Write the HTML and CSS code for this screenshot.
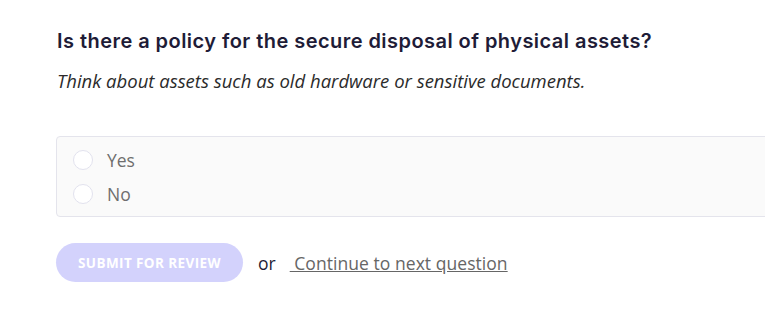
FILE: index.html
```html
<!DOCTYPE html>
<html lang="en">
<head>
  <meta charset="UTF-8">
  <title>Question</title>
  <meta name="viewport" content="width=device-width, initial-scale=1.0">
  <link rel="stylesheet" href="styles.css">
</head>
<body>
  <div class="question">
    <h2 class="question-title">Is there a policy for the secure disposal of physical assets?</h2>
    <p class="question-hint">Think about assets such as old hardware or sensitive documents.</p>

    <div class="options">
      <label class="option">
        <input type="radio" name="answer" value="yes">
        <span class="radio"></span>
        <span class="option-label">Yes</span>
      </label>
      <label class="option">
        <input type="radio" name="answer" value="no">
        <span class="radio"></span>
        <span class="option-label">No</span>
      </label>
    </div>

    <div class="actions">
      <button class="submit-btn" disabled>Submit for review</button>
      <span class="or">or</span>
      <a class="next-link" href="#"> Continue to next question</a>
    </div>
  </div>
</body>
</html>
```

FILE: styles.css
```css
html, body {
  margin: 0;
  overflow: hidden;
}

body {
  font-family: 'Open Sans', sans-serif;
  background: #fff;
}

.question {
  padding: 28px 0 0 56px;
  width: 760px;
}

.question-title {
  font-family: 'Inter', 'Open Sans', sans-serif;
  font-weight: 600;
  font-size: 20px;
  letter-spacing: 0.45px;
  color: #1e1c37;
  margin: 0 0 0 1px;
  line-height: 26px;
}

.question-hint {
  font-style: italic;
  font-size: 18.5px;
  color: #2b2b2b;
  margin: 15px 0 0 1px;
  line-height: 24px;
}

.options {
  margin-top: 43px;
  border: 1px solid #e4e4ec;
  border-radius: 4px;
  background: #fafafa;
  padding: 11px 0 10px 16px;
  display: flex;
  flex-direction: column;
  gap: 10px;
}

.option {
  display: flex;
  align-items: center;
  height: 24px;
  cursor: pointer;
}

.option input {
  display: none;
}

.radio {
  width: 18px;
  height: 18px;
  border: 1px solid #e2e2ee;
  border-radius: 50%;
  background: #fff;
}

.option-label {
  margin-left: 14px;
  font-size: 17.5px;
  color: #6e6e6e;
}

.actions {
  margin-top: 26px;
  display: flex;
  align-items: center;
}

.submit-btn {
  width: 187px;
  height: 39px;
  border: none;
  border-radius: 20px;
  background: #d3d2fc;
  color: #fff;
  font-family: 'Open Sans', sans-serif;
  font-weight: 700;
  font-size: 13.5px;
  text-transform: uppercase;
  letter-spacing: 0.4px;
}

.or {
  margin-left: 15px;
  font-size: 17.5px;
  color: #1e1c37;
}

.next-link {
  margin-left: 14px;
  font-size: 17.5px;
  letter-spacing: 0.05px;
  color: #666;
  text-decoration: underline;
  white-space: pre;
}
```
